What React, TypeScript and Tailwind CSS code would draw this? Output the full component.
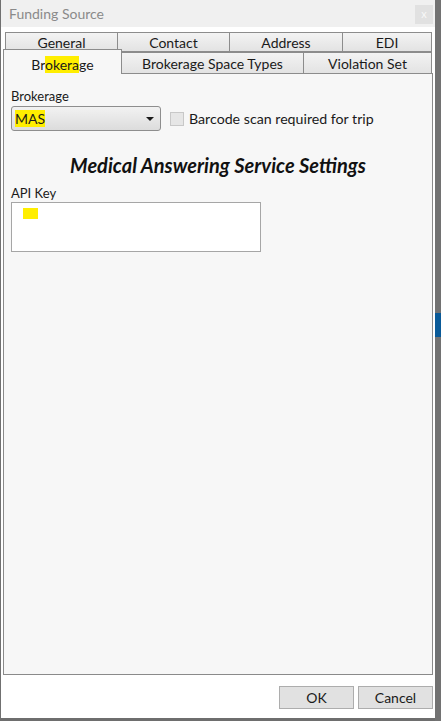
import { ReactNode } from 'react';

const font = { fontFamily: 'Lato, "Noto Sans", sans-serif' };

function Tab({ w, children }: { w: string; children: ReactNode }) {
  return (
    <div
      className={`${w} h-[20px] flex items-center justify-center border border-[#8c8c8c] -ml-px first:ml-0 bg-gradient-to-b from-[#f3f3f3] to-[#e3e3e3] text-[14px] text-[#1a1a1a]`}
    >
      {children}
    </div>
  );
}

function Hl({ children }: { children: ReactNode }) {
  return <span className="bg-[#ffee00]">{children}</span>;
}

export default function App() {
  return (
    <div className="flex w-[441px] h-[721px] bg-white overflow-hidden" style={font}>
      {/* Dialog window */}
      <div className="w-[435px] h-[721px] flex flex-col bg-white border-l border-[#707070] border-b-[3px] border-b-[#6e6e6e]">
        {/* Title bar */}
        <div className="h-[27px] flex-none flex items-center justify-between bg-[#f0f0f0] pl-[8px] pr-[2px]">
          <span className="text-[14px] text-[#8a8a8a]">Funding Source</span>
          <div className="w-[18px] h-[19px] mt-[2px] bg-[#e1e1e1] flex items-center justify-center text-[11px] text-[#f8f8f8]">
            x
          </div>
        </div>

        <div className="h-[5px] flex-none" />

        {/* Tab strip row 1 */}
        <div className="flex pl-[4px] h-[20px] flex-none">
          <Tab w="w-[113px]">General</Tab>
          <Tab w="w-[113px]">Contact</Tab>
          <Tab w="w-[114px]">Address</Tab>
          <Tab w="w-[90px]">EDI</Tab>
        </div>

        {/* Tab strip row 2 */}
        <div className="flex pl-[2px] h-[21px] flex-none relative z-10">
          <div className="w-[119px] h-[25px] -mt-[3px] flex items-start justify-center pt-[4px] border border-b-0 border-[#8c8c8c] bg-[#f7f7f7] text-[14px] text-[#1a1a1a]">
            <span>
              Br<Hl>okera</Hl>ge
            </span>
          </div>
          <div className="w-[183px] h-[22px] -ml-px flex items-center justify-center border border-[#8c8c8c] bg-gradient-to-b from-[#f3f3f3] to-[#e3e3e3] text-[14px] text-[#1a1a1a]">
            Brokerage Space Types
          </div>
          <div className="w-[129px] h-[22px] -ml-px flex items-center justify-center border border-[#8c8c8c] bg-gradient-to-b from-[#f3f3f3] to-[#e3e3e3] text-[14px] text-[#1a1a1a]">
            Violation Set
          </div>
        </div>

        {/* Content panel */}
        <div className="ml-[2px] w-[430px] h-[602px] flex-none border border-[#8a8a8a] bg-[#f7f7f7] px-[7px] pt-[14px]">
          <div className="text-[13px] text-[#1a1a1a] leading-[16px]">Brokerage</div>
          <div className="flex items-center mt-[2px]">
            <div className="w-[150px] h-[25px] rounded-[3px] border border-[#8e8e8e] bg-gradient-to-b from-[#f2f2f2] to-[#dcdcdc] flex items-center justify-between pl-[3px] pr-[6px]">
              <span className="text-[14px] text-[#1a1a1a]">
                <Hl>MAS</Hl>
              </span>
              <svg width="8" height="4" viewBox="0 0 8 4">
                <path d="M0 0 H8 L4 4 Z" fill="#1a1a1a" />
              </svg>
            </div>
            <div className="ml-[9px] w-[14px] h-[14px] border border-[#c8c8c8] bg-[#e6e6e6]" />
            <span className="ml-[5px] text-[14.2px] text-[#1a1a1a]">Barcode scan required for trip</span>
          </div>

          <div className="mt-[22px] text-center text-[20px] font-bold italic text-[#111] leading-[24px]">
            Medical Answering Service Settings
          </div>

          <div className="mt-[8px] text-[13px] text-[#1a1a1a] leading-[16px]">API Key</div>
          <div className="mt-[1px] w-[250px] h-[50px] border border-[#a6a6a6] bg-white pl-[11px] pt-[5px]">
            <div className="w-[15px] h-[11px] bg-[#ffee00]" />
          </div>
        </div>

        {/* Buttons */}
        <div className="flex justify-end gap-[4px] pr-[2px] mt-[11px]">
          <button className="w-[75px] h-[23px] border border-[#adadad] bg-[#e1e1e1] text-[14px] text-[#1a1a1a]">OK</button>
          <button className="w-[75px] h-[23px] border border-[#adadad] bg-[#e1e1e1] text-[14px] text-[#1a1a1a]">Cancel</button>
        </div>
      </div>

      {/* Background behind the dialog */}
      <div className="flex-1 flex flex-col bg-[#727272]">
        <div className="h-[313px]" />
        <div className="h-[24px] bg-[#0a5a98]" />
      </div>
    </div>
  );
}
